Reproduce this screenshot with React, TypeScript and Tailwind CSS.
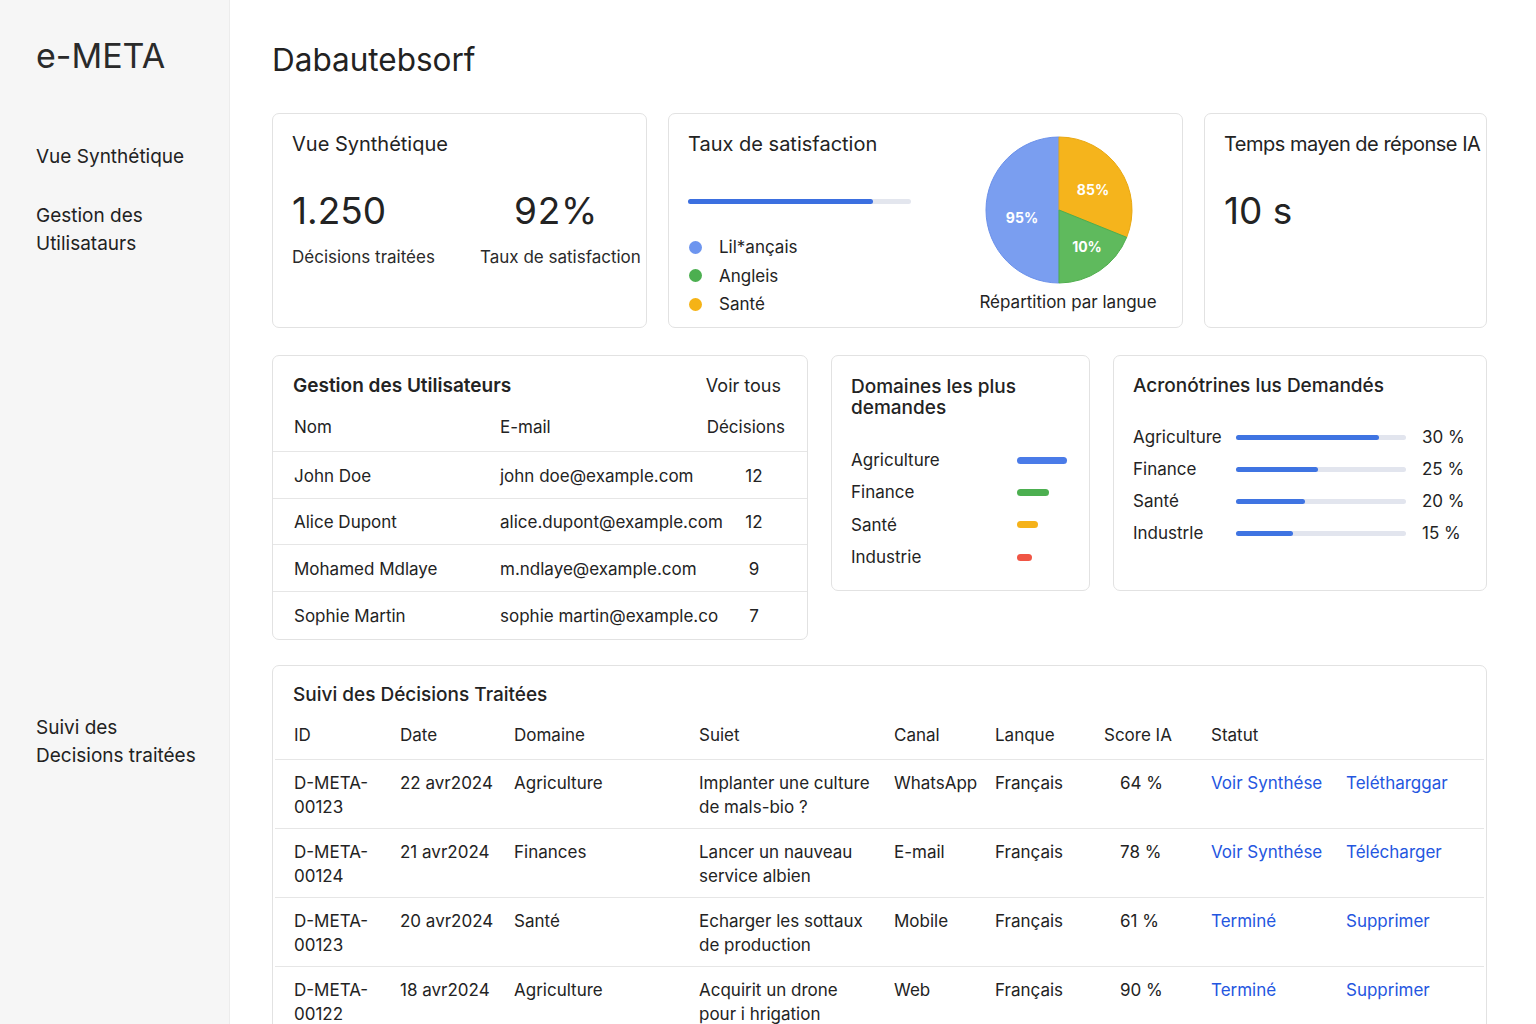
const USERS = [
  { name: 'John Doe', email: 'john doe@example.com', count: '12' },
  { name: 'Alice Dupont', email: 'alice.dupont@example.com', count: '12' },
  { name: 'Mohamed Mdlaye', email: 'm.ndlaye@example.com', count: '9' },
  { name: 'Sophie Martin', email: 'sophie martin@example.co', count: '7' },
]

const DOMAINS = [
  { label: 'Agriculture', bar: 'w-[50px] bg-[#4a7be8]' },
  { label: 'Finance', bar: 'w-[32px] bg-[#4caf50]' },
  { label: 'Santé', bar: 'w-[21px] bg-[#f5b21a]' },
  { label: 'Industrie', bar: 'w-[15px] bg-[#f05545]' },
]

const ACRO = [
  { label: 'Agriculture', fill: 'w-[143px]', pct: '30 %' },
  { label: 'Finance', fill: 'w-[82px]', pct: '25 %' },
  { label: 'Santé', fill: 'w-[69px]', pct: '20 %' },
  { label: 'Industrle', fill: 'w-[57px]', pct: '15 %' },
]

const DECISIONS = [
  { id: ['D-META-', '00123'], date: '22 avr2024', domain: 'Agriculture', subject: ['Implanter une culture', 'de mals-bio ?'], canal: 'WhatsApp', lang: 'Français', score: '64 %', a: 'Voir Synthése', b: 'Teléthargg​ar' },
  { id: ['D-META-', '00124'], date: '21 avr2024', domain: 'Finances', subject: ['Lancer un nauveau', 'service albien'], canal: 'E-mail', lang: 'Français', score: '78 %', a: 'Voir Synthése', b: 'Télécharger' },
  { id: ['D-META-', '00123'], date: '20 avr2024', domain: 'Santé', subject: ['Echarger les sottaux', 'de production'], canal: 'Mobile', lang: 'Français', score: '61 %', a: 'Terminé', b: 'Supprimer' },
  { id: ['D-META-', '00122'], date: '18 avr2024', domain: 'Agriculture', subject: ['Acquirit un drone', 'pour i hrigation'], canal: 'Web', lang: 'Français', score: '90 %', a: 'Terminé', b: 'Supprimer' },
]

const card = 'bg-white border border-[#e2e2e2] rounded-[7px]'

function Pie() {
  // centre 74,74, radius 73; yellow 0-112deg, green 112-180deg, blue 180-360deg
  const r = 73
  const pt = (deg: number) => {
    const a = ((deg - 90) * Math.PI) / 180
    return `${(74 + r * Math.cos(a)).toFixed(2)} ${(74 + r * Math.sin(a)).toFixed(2)}`
  }
  return (
    <svg width="148" height="148" viewBox="0 0 148 148">
      <path d={`M74 74 L${pt(180)} A${r} ${r} 0 0 1 ${pt(360)} Z`} fill="#7a9ef0" stroke="#6a90ea" strokeWidth="1" />
      <path d={`M74 74 L${pt(0)} A${r} ${r} 0 0 1 ${pt(112)} Z`} fill="#f5b41c" stroke="#e9a812" strokeWidth="1" />
      <path d={`M74 74 L${pt(112)} A${r} ${r} 0 0 1 ${pt(180)} Z`} fill="#5fba5d" stroke="#4fae4d" strokeWidth="1" />
      <g fill="#fff" fontFamily="Inter, sans-serif" fontWeight="700" fontSize="14" textAnchor="middle">
        <text x="37" y="87">95%</text>
        <text x="108" y="59">85%</text>
        <text x="102" y="116">10%</text>
      </g>
    </svg>
  )
}

export default function App() {
  return (
    <div className="flex min-h-screen bg-white text-[#232323] font-['Inter',sans-serif]">
      {/* Sidebar */}
      <aside className="w-[230px] shrink-0 bg-[#f6f6f6] border-r border-[#ececec] pl-[36px] pt-[36px]">
        <div className="text-[34px] leading-[40px] text-[#2a2a2a]">e-META</div>
        <nav className="text-[19px] leading-[28px] text-[#222]">
          <div className="mt-[67px]">Vue Synthétique</div>
          <div className="mt-[31px]">Gestion des<br />Utilisataurs</div>
          <div className="mt-[456px]">Suivi des<br />Decisions traitées</div>
        </nav>
      </aside>

      {/* Main */}
      <main className="flex-1 pl-[42px] pr-[49px] pt-[40px]">
        <h1 className="text-[31.5px] leading-[40px] text-[#222] mb-[33px]">Dabautebsorf</h1>

        {/* Row 1 */}
        <div className="grid grid-cols-[375px_515px_283px] gap-[21px] h-[215px]">
          <div className={`${card} pt-[18px] px-[19px]`}>
            <div className="text-[20px] leading-[24px]">Vue Synthétique</div>
            <div className="flex mt-[32px]">
              <div className="w-[188px] shrink-0">
                <div className="text-[37px] leading-[46px]">1.250</div>
                <div className="text-[17px] leading-[24px] mt-[11px] text-[#2a2a2a]">Décisions traitées</div>
              </div>
              <div className="w-[160px] shrink-0 whitespace-nowrap">
                <div className="text-[37px] leading-[46px] tracking-[0.02em] pl-[34px]">92%</div>
                <div className="text-[17px] leading-[24px] mt-[11px] text-[#2a2a2a]">Taux de satisfaction</div>
              </div>
            </div>
          </div>

          <div className={`${card} flex pl-[19px] pr-[20px] pt-[18px]`}>
            <div className="flex-1">
              <div className="text-[20px] leading-[24px]">Taux de satisfaction</div>
              <div className="mt-[43px] w-[223px] h-[5px] rounded-full bg-[#e3e6ee]">
                <div className="w-[185px] h-[5px] rounded-full bg-[#3b6fe0]" />
              </div>
              <div className="mt-[29px] text-[17px] leading-[28.5px]">
                {[
                  { c: 'bg-[#6d95ef]', t: 'Lil*ançais' },
                  { c: 'bg-[#4caf50]', t: 'Angleis' },
                  { c: 'bg-[#f5b316]', t: 'Santé' },
                ].map((l) => (
                  <div key={l.t} className="flex items-center">
                    <span className={`w-[13px] h-[13px] rounded-full ${l.c} ml-[1px] mr-[17px]`} />
                    <span>{l.t}</span>
                  </div>
                ))}
              </div>
            </div>
            <div className="w-[188px] flex flex-col items-center pt-[4px]">
              <div className="mr-[18px]">
                <Pie />
              </div>
              <div className="text-[17px] leading-[24px] mt-[6px] whitespace-nowrap">Répartition par langue</div>
            </div>
          </div>

          <div className={`${card} pt-[18px] pl-[19px] whitespace-nowrap`}>
            <div className="text-[20px] leading-[24px] tracking-[-0.025em]">Temps mayen de réponse IA</div>
            <div className="text-[37px] leading-[46px] mt-[32px]">10 s</div>
          </div>
        </div>

        {/* Row 2 */}
        <div className="grid grid-cols-[536px_259px_374px] gap-[23px] items-start mt-[27px]">
          <div className={`${card} pt-[18px] pb-[1px]`}>
            <div className="flex justify-between items-center pl-[20px] pr-[26px] text-[19px] leading-[24px]">
              <span className="font-semibold">Gestion des Utilisateurs</span>
              <span className="text-[18px]">Voir tous</span>
            </div>
            <div className="grid grid-cols-[206px_205px_80px] items-center h-[54px] pl-[21px] pt-[7px] border-b border-[#e6e6e6] text-[17px]">
              <span>Nom</span>
              <span>E-mail</span>
              <span className="text-right">Décisions</span>
            </div>
            {USERS.map((u, i) => (
              <div
                key={u.name}
                className={`grid grid-cols-[206px_205px_80px] items-center h-[46.5px] pl-[21px] pt-[3px] text-[17px] ${i < USERS.length - 1 ? 'border-b border-[#e6e6e6]' : ''}`}
              >
                <span>{u.name}</span>
                <span className="whitespace-nowrap">{u.email}</span>
                <span className="text-center pl-[18px]">{u.count}</span>
              </div>
            ))}
          </div>

          <div className={`${card} h-[236px] pt-[20px] px-[19px]`}>
            <div className="text-[19px] leading-[21px] font-medium">Domaines les plus<br />demandes</div>
            <div className="mt-[26px] text-[17px] leading-[32.3px]">
              {DOMAINS.map((d) => (
                <div key={d.label} className="grid grid-cols-[166px_auto] items-center">
                  <span>{d.label}</span>
                  <span className={`h-[7px] rounded-full ${d.bar}`} />
                </div>
              ))}
            </div>
          </div>

          <div className={`${card} h-[236px] pt-[18px] px-[19px]`}>
            <div className="text-[19px] leading-[24px] font-medium">Acronótrines lus Demandés</div>
            <div className="mt-[23px] text-[17px] leading-[32px]">
              {ACRO.map((a) => (
                <div key={a.label} className="grid grid-cols-[103px_170px_auto] items-center">
                  <span>{a.label}</span>
                  <span className="h-[5px] rounded-full bg-[#e2e5ee]">
                    <span className={`block h-[5px] rounded-full bg-[#3f74e2] ${a.fill}`} />
                  </span>
                  <span className="pl-[16px]">{a.pct}</span>
                </div>
              ))}
            </div>
          </div>
        </div>

        {/* Row 3 */}
        <div className={`${card} mt-[25px] pt-[17px]`}>
          <div className="pl-[20px] text-[19px] leading-[24px] font-medium">Suivi des Décisions Traitées</div>
          <div className="mx-[2px] grid grid-cols-[106px_114px_185px_195px_101px_109px_107px_135px_1fr] items-center h-[53px] pt-[6px] pl-[19px] border-b border-[#e6e6e6] text-[17px]">
            <span>ID</span>
            <span>Date</span>
            <span>Domaine</span>
            <span>Suiet</span>
            <span>Canal</span>
            <span>Lanque</span>
            <span>Score IA</span>
            <span>Statut</span>
            <span />
          </div>
          {DECISIONS.map((d, i) => (
            <div
              key={i}
              className="mx-[2px] grid grid-cols-[106px_114px_185px_195px_101px_109px_107px_135px_1fr] items-start pt-[11px] pb-[9px] pl-[19px] border-b border-[#e6e6e6] text-[17px] leading-[24px]"
            >
              <span>{d.id[0]}<br />{d.id[1]}</span>
              <span className="whitespace-nowrap">{d.date}</span>
              <span>{d.domain}</span>
              <span>{d.subject[0]}<br />{d.subject[1]}</span>
              <span>{d.canal}</span>
              <span>{d.lang}</span>
              <span className="pl-[16px]">{d.score}</span>
              <span className="text-[#2456e0]">{d.a}</span>
              <span className="text-[#2456e0]">{d.b}</span>
            </div>
          ))}
        </div>
      </main>
    </div>
  )
}
